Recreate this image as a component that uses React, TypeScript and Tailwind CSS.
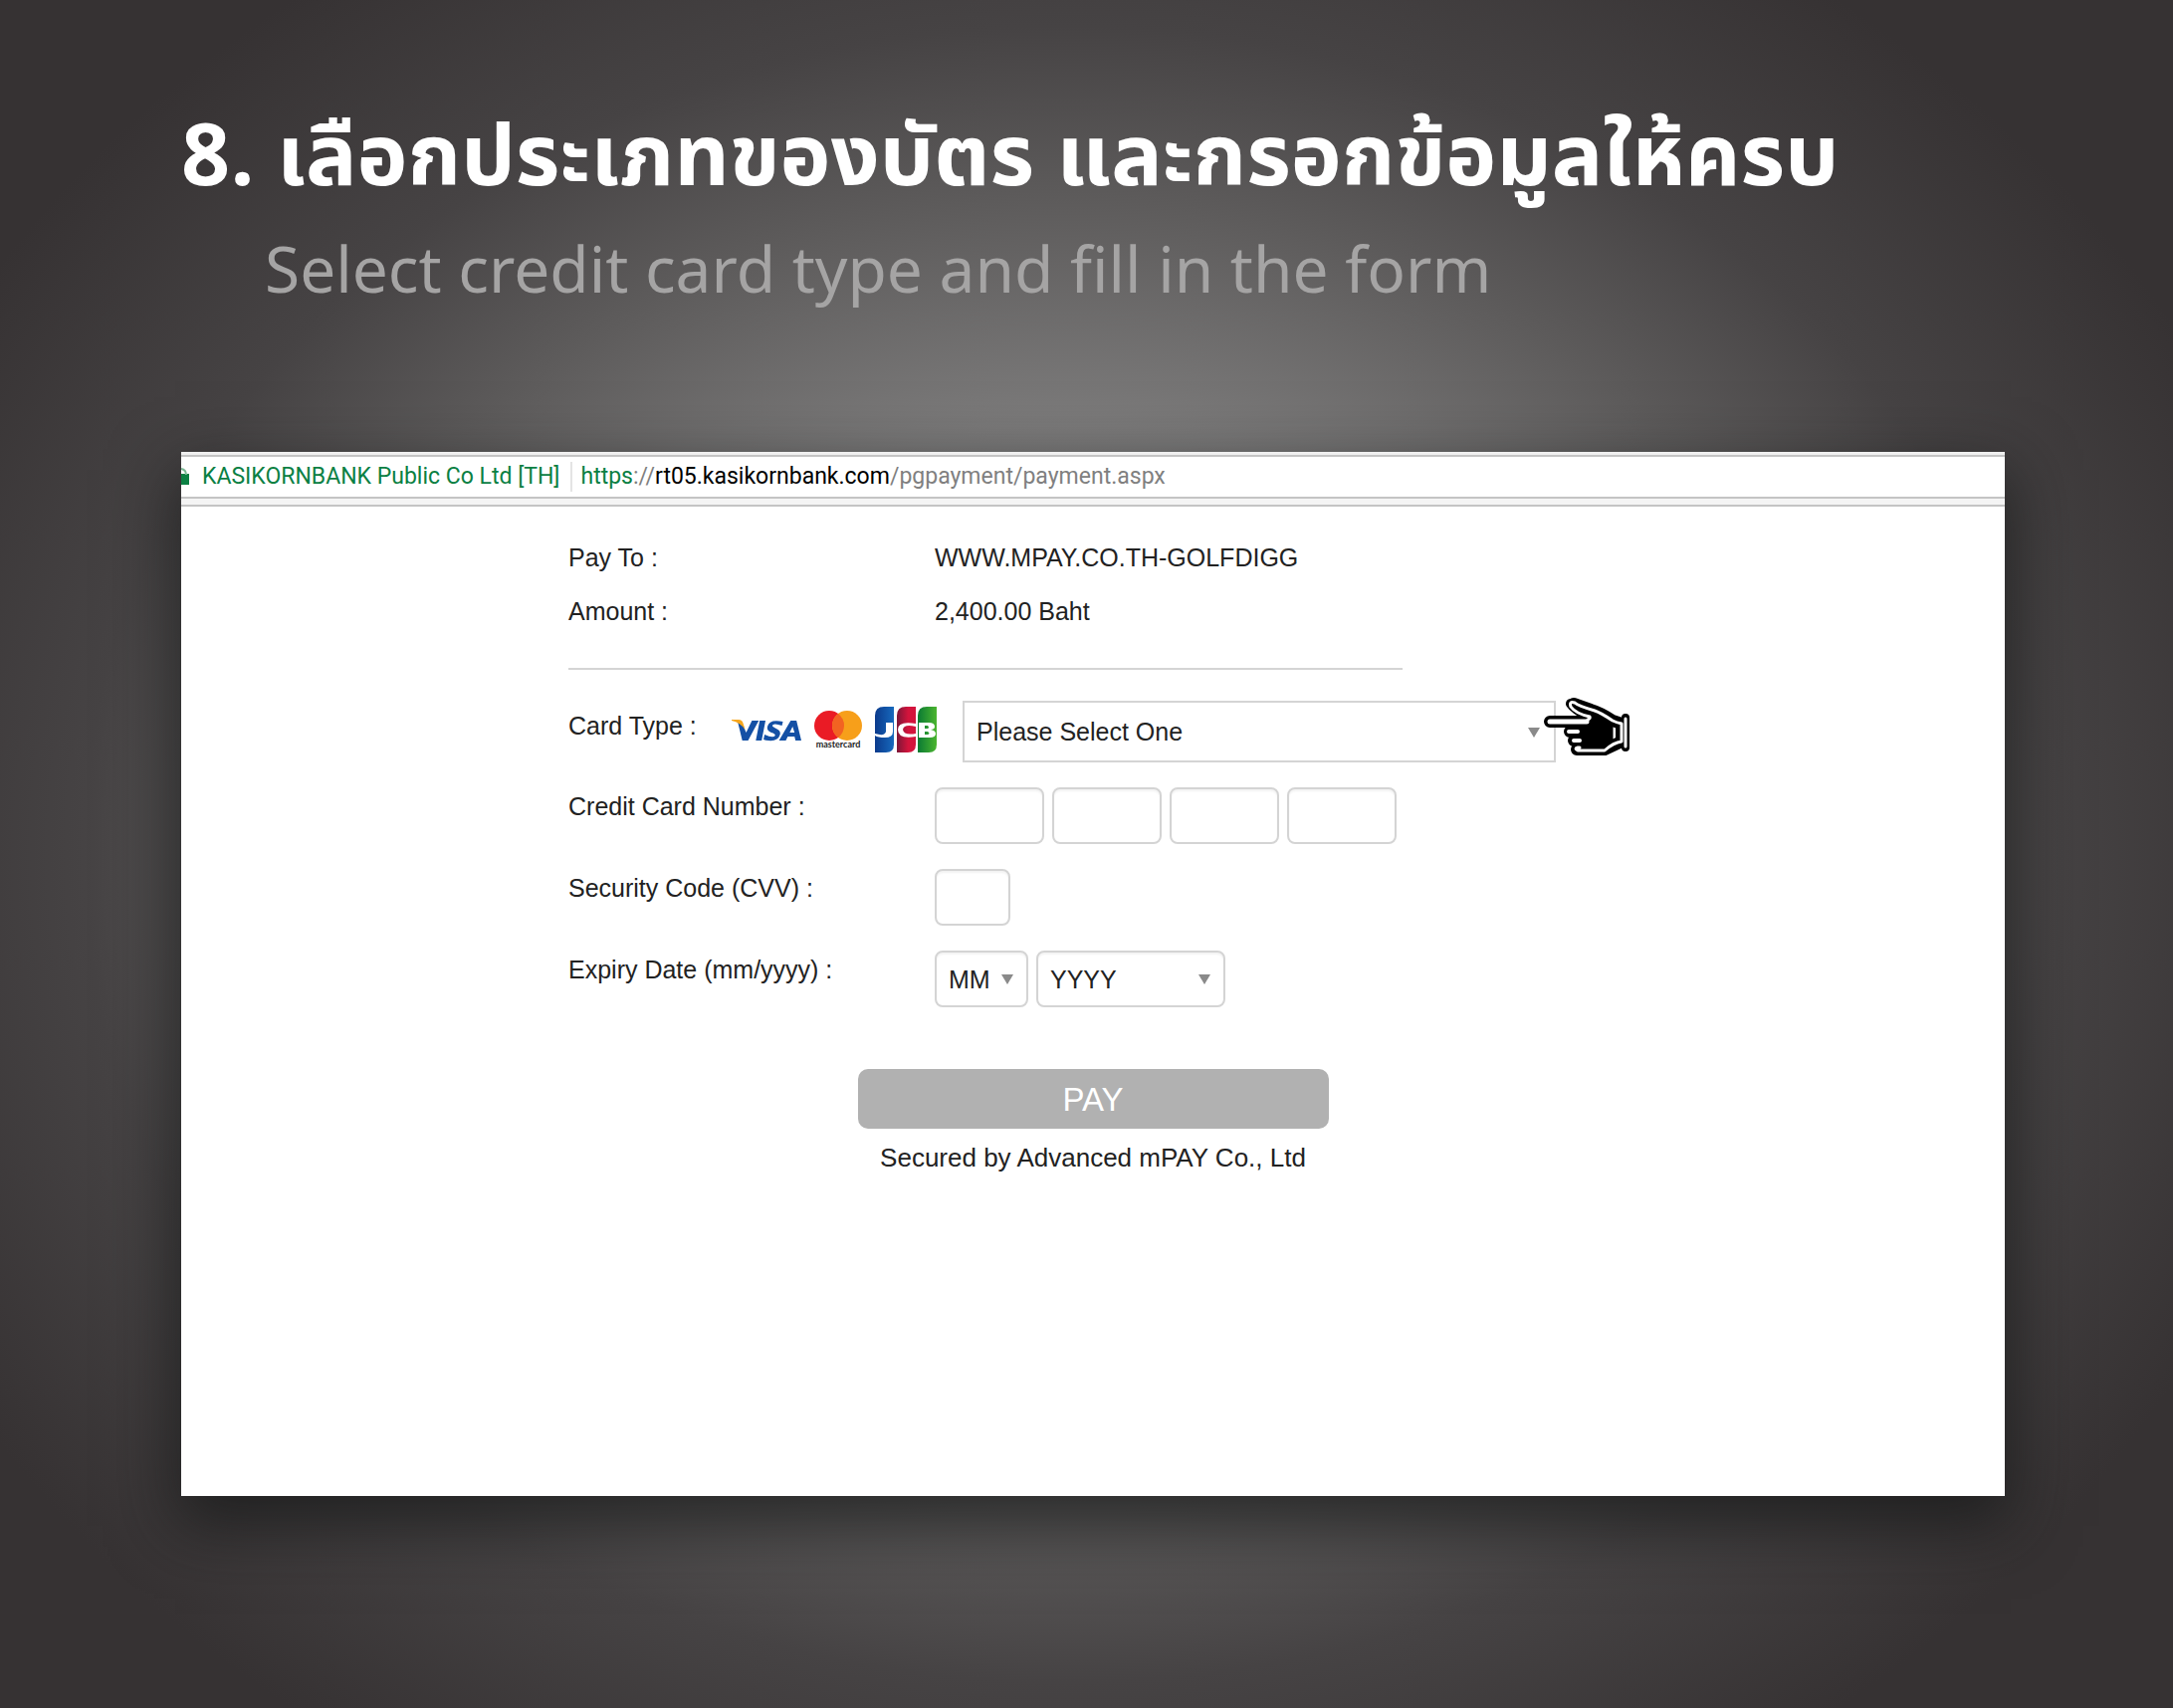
import { type ReactNode, useId } from "react";

const field =
  "h-[57px] rounded-lg border-2 border-[#d4d4d4] bg-white text-[25px] text-[#222] shadow-[inset_0_2px_2px_rgba(0,0,0,0.05)] outline-none";

function Row({ label, htmlFor, children }: { label: string; htmlFor?: string; children: ReactNode }) {
  return (
    <div className="flex h-[82px] items-start">
      <label htmlFor={htmlFor} className="w-[368px] shrink-0 pt-1 leading-[30px]">
        {label}
      </label>
      <div className="flex gap-2">{children}</div>
    </div>
  );
}

function Dropdown({
  label,
  id,
  option,
  className,
  arrow,
}: {
  label: string;
  id?: string;
  option: string;
  className: string;
  arrow: string;
}) {
  return (
    <div className="relative flex">
      <select id={id} aria-label={label} className={`appearance-none ${className}`}>
        <option>{option}</option>
      </select>
      <svg className={`pointer-events-none absolute h-[10px] w-3 ${arrow}`} viewBox="0 0 12 10" aria-hidden="true">
        <path d="M0 0h12L6 10z" fill="#8a8a8a" />
      </svg>
    </div>
  );
}

function VisaLogo() {
  return (
    <svg className="h-[22px] w-[70px]" viewBox="0 0 72 22" preserveAspectRatio="none" role="img" aria-label="Visa">
      <path
        d="M6 1q3 1 5 3l4 9 6-12h7L17 21h-6zM29 1h6l-4 20h-6zM53 2l-1 4q-9-3-10 0 0 1 4 3 5 2 4 6-2 7-12 6-3 0-5-1l1-5q9 4 11 1 0-2-4-3-5-2-4-6 2-8 16-5zM61 1h6l5 20h-6l-1-4h-7l-2 4h-7zm2 6-3 6h5z"
        fill="#1450a5"
        fillRule="evenodd"
      />
      <path d="M0 0h7q4 0 5 4l2 6Q9 3 0 1z" fill="#f6a61c" />
    </svg>
  );
}

function MastercardLogo() {
  return (
    <svg className="h-[42px] w-12" viewBox="0 0 48 42" role="img" aria-label="Mastercard">
      <circle cx="15" cy="15" r="15" fill="#ea1b25" />
      <circle cx="33" cy="15" r="15" fill="#f79f1a" />
      <path d="M24 3a15 15 0 0 1 0 24 15 15 0 0 1 0-24z" fill="#f26322" />
      <text x="24" y="37" textAnchor="middle" fontSize="9" fontFamily="Lato, sans-serif" fontWeight="700" fill="#222">
        mastercard
      </text>
    </svg>
  );
}

function JcbLogo() {
  return (
    <svg className="h-[46px] w-[62px]" viewBox="0 0 62 46" role="img" aria-label="JCB">
      <defs>
        <linearGradient id="jcb-blue">
          <stop stopColor="#0b3a8c" />
          <stop offset="1" stopColor="#1769bd" />
        </linearGradient>
        <linearGradient id="jcb-red">
          <stop stopColor="#7d1638" />
          <stop offset="0.6" stopColor="#d3143c" />
        </linearGradient>
        <linearGradient id="jcb-green">
          <stop stopColor="#0a7a33" />
          <stop offset="1" stopColor="#4bb52f" />
        </linearGradient>
      </defs>
      <path d="M9 0h10v38q0 8-8 8H0V9q0-9 9-9z" fill="url(#jcb-blue)" />
      <path d="M31 0h10v38q0 8-8 8H22V9q0-9 9-9z" fill="url(#jcb-red)" />
      <path d="M52 0h10v38q0 8-8 8H43V9q0-9 9-9z" fill="url(#jcb-green)" />
      <path
        d="M11 16h7v9q0 6-8 6-7 0-10-2v-2q10 3 11-2zM41 17v3q-12-3-13 3 1 6 13 4v3q-18 3-18-7 0-9 18-6zM44 16h10q6 0 6 4 0 3-4 3 5 1 5 4 0 4-6 4H44zm6 3v3h3q2-1 0-3zm0 6v3h3q3-1 0-3z"
        fill="#fff"
        fillRule="evenodd"
      />
    </svg>
  );
}

function PointingHand() {
  return (
    <svg
      className="pointer-events-none absolute -top-[3px] left-[583px] h-[58px] w-[88px]"
      viewBox="0 0 88 58"
      aria-hidden="true"
    >
      <g fill="none" stroke="#000" strokeLinejoin="round" strokeLinecap="round">
        <path d="M7 24h38M27 34h10M31 43h8M34 52h28l17-8V26l-9-3q-12-8-22-11L31 6" strokeWidth="12" />
        <path d="M28 6q4 6 18 13" strokeWidth="10" />
        <path d="M36 24 44 12 70 23v22l-9 6H38z" fill="#000" />
        <path d="M83 20v30" strokeWidth="8" />
      </g>
      <g fill="none" stroke="#fff" strokeLinejoin="round" strokeLinecap="round">
        <path d="M7 24h37" strokeWidth="5" />
        <path
          d="M45 22q3-1 2-3-14-3-19-10-2-6 4-4 3 3 20 8 6 2 18 10 4 2 9 3v18q-8 1-17 9H35q-4-2 0-3h2"
          strokeWidth="3"
        />
        <path d="M26 34h9M31 43h6" strokeWidth="4" />
        <path d="M83 21v28" strokeWidth="3" />
      </g>
    </svg>
  );
}

function AddressBar() {
  return (
    <header className="border-t-[3px] border-[#f0f0f0] font-['Roboto','Inter',sans-serif] text-[23px] leading-[30px]">
      <div className="flex h-[44px] items-center border-y-2 border-[#c4c4c4]">
        <svg className="h-[18px] w-2 shrink-0" viewBox="0 0 8 18" aria-hidden="true">
          <path d="M0 6h8v11H0z" fill="#0b8043" />
          <path d="M0 1q5 1 5 6" fill="none" stroke="#7bb894" strokeWidth="2" />
        </svg>
        <span className="ml-[13px] text-[#0b8043]">KASIKORNBANK Public Co Ltd [TH]</span>
        <span className="ml-[11px] h-[30px] w-[2px] bg-[#e4e4e4]" />
        <a href="https://rt05.kasikornbank.com/pgpayment/payment.aspx" className="ml-2 text-[#808080]">
          <span className="text-[#0b8043]">https</span>://<span className="text-black">rt05.kasikornbank.com</span>
          /pgpayment/payment.aspx
        </a>
      </div>
      <div className="h-2 border-b-2 border-[#c4c4c4] bg-[#f4f4f4]" />
    </header>
  );
}

function PaymentForm() {
  const id = useId();
  return (
    <form className="mx-auto max-w-[1054px] pt-9 text-[25px] leading-[30px] text-[#222]">
      <dl className="grid grid-cols-[368px_1fr] gap-y-6">
        <dt>Pay To :</dt>
        <dd>WWW.MPAY.CO.TH-GOLFDIGG</dd>
        <dt>Amount :</dt>
        <dd>2,400.00 Baht</dd>
      </dl>
      <hr className="mt-[42px] w-[838px] border-t-2 border-[#d4d4d4]" />

      <div className="mt-[31px] flex h-[87px] items-start">
        <label htmlFor={`${id}-type`} className="w-[164px] pt-[10px]">
          Card Type :
        </label>
        <div className="flex w-[232px] items-start gap-[13px] pt-[6px]">
          <div className="pt-[13px]">
            <VisaLogo />
          </div>
          <div className="pt-1">
            <MastercardLogo />
          </div>
          <JcbLogo />
        </div>
        <div className="relative">
          <Dropdown
            id={`${id}-type`}
            label="Card Type"
            option="Please Select One"
            className="h-[62px] w-[596px] border-2 border-[#d4d4d4] bg-white pl-3 text-[25px] outline-none"
            arrow="right-4 top-[27px]"
          />
          <PointingHand />
        </div>
      </div>

      <Row label="Credit Card Number :" htmlFor={`${id}-n1`}>
        {[1, 2, 3, 4].map((n) => (
          <input key={n} id={`${id}-n${n}`} aria-label={`Card number part ${n}`} className={`w-[110px] px-3 ${field}`} />
        ))}
      </Row>
      <Row label="Security Code (CVV) :" htmlFor={`${id}-cvv`}>
        <input id={`${id}-cvv`} className={`w-[76px] px-3 ${field}`} />
      </Row>
      <Row label="Expiry Date (mm/yyyy) :" htmlFor={`${id}-mm`}>
        <Dropdown id={`${id}-mm`} label="Month" option="MM" className={`w-[94px] pl-3 pr-[38px] ${field}`} arrow="right-[15px] top-6" />
        <Dropdown label="Year" option="YYYY" className={`w-[190px] pl-3 pr-[38px] ${field}`} arrow="right-[15px] top-6" />
      </Row>

      <div className="mt-[37px] flex flex-col items-center">
        <button type="submit" className="h-[60px] w-[473px] rounded-[10px] bg-[#b1b1b1] text-[33px] leading-none text-white">
          PAY
        </button>
        <p className="mt-[14px] text-[26px]">Secured by Advanced mPAY Co., Ltd</p>
      </div>
    </form>
  );
}

export default function App() {
  return (
    <main className="min-h-screen bg-[#363233] bg-[radial-gradient(ellipse_1280px_1080px_at_49%_50%,#a8a7a7_0%,#7c7b7b_40%,#5d5b5b_61%,#464344_77%,#363233_100%)] pb-[213px] pl-[182px] pr-[169px] pt-[104px] font-['Liberation_Sans',Arial,sans-serif]">
      <h1 className="h-[124px] whitespace-nowrap font-['Noto_Sans_Thai','Noto_Sans',sans-serif] text-[86px] font-bold leading-[112px] text-white">
        8. เลือกประเภทของบัตร และกรอกข้อมูลให้ครบ
      </h1>
      <p className="h-[226px] whitespace-nowrap pl-[84px] font-['Noto_Sans','Open_Sans',sans-serif] text-[64px] leading-[84px] text-[#a5a4a4]">
        Select credit card type and fill in the form
      </p>
      <section className="h-[1049px] bg-white shadow-[0_24px_60px_6px_rgba(20,22,22,0.7)]">
        <AddressBar />
        <PaymentForm />
      </section>
    </main>
  );
}
